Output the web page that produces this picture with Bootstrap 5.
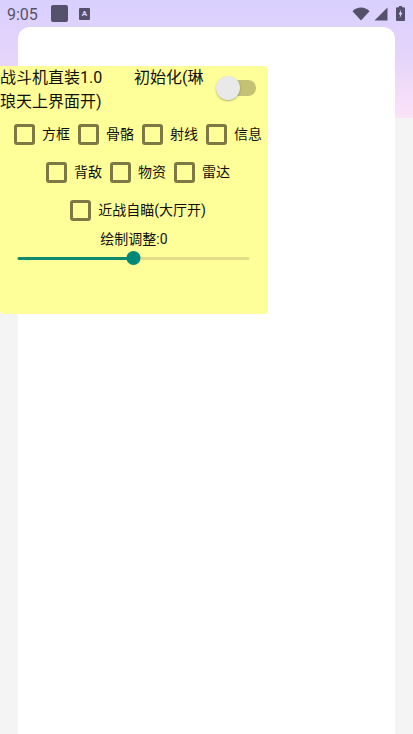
<!DOCTYPE html>
<html lang="zh">
<head>
<meta charset="utf-8">
<meta name="viewport" content="width=device-width, initial-scale=1">
<link href="https://cdn.jsdelivr.net/npm/bootstrap@5.3.0/dist/css/bootstrap.min.css" rel="stylesheet">
<style>
html,body{height:100%}
body{background:#f4f4f4;font-family:Roboto,"Noto Sans CJK SC",sans-serif;color:#111;overflow:hidden;position:relative}
.top-wash{height:118px;background:linear-gradient(180deg,#d9d0ff 0%,#e4d4fb 45%,#fbe2f7 100%)}
.status-row{height:27px;padding:0 8px 0 7px;color:#55516b;font-size:16px}
.status-time{width:44px;line-height:27px;margin-top:2px}
.status-square{width:17px;height:17px;border-radius:2px;background:#55516b}
.status-app{width:11px;height:12px;border-radius:1px;background:#55516b;color:#e0d6ff;font-size:8px;font-weight:700;line-height:12px;text-align:center;margin-left:11px}
.sheet{position:absolute;left:18px;right:18px;top:27px;bottom:0;background:#fff;border-radius:12px 12px 0 0}
.overlay-panel{position:absolute;left:0;top:66px;width:268px;height:248px;background:#ffff99;border-radius:0 4px 4px 4px}
.title-text{width:212px;font-size:16px;line-height:24px;white-space:pre-wrap}
.toggle-track{position:relative;display:block;width:32px;height:16px;border-radius:8px;background:#c4c074;margin:14px 0 0 12px}
.toggle-knob{position:absolute;left:-8px;top:-4px;width:24px;height:24px;border-radius:50%;background:#e9e9e9;box-shadow:0 1px 2px rgba(0,0,0,.3)}
.opt-row{height:38px;font-size:14px}
.opt-row-first{margin-top:1px}
.opt-item{padding-left:8px;gap:7px}
.form-check-input.opt-box{width:21px;height:21px;margin:0;background-color:transparent;border:3px solid #7d7945;border-radius:3px;flex:none}
.opt-label{white-space:nowrap;line-height:20px;width:28px}
.opt-item-wide .opt-label{width:auto}
.opt-item-plain{width:64px}
.adjust-label{font-size:14px;line-height:20px}
.form-range.adjust-range{display:block;width:232px;height:14px;margin:2px auto 0;padding:0;transform:translateX(-.5px)}
.adjust-range::-webkit-slider-runnable-track{height:3px;border-radius:2px;background:linear-gradient(90deg,#0f8a70 50%,#e1dd88 50%)}
.adjust-range::-webkit-slider-thumb{width:14px;height:14px;margin-top:-5.5px;border-radius:50%;background:#00897b;border:0;box-shadow:none;-webkit-appearance:none;appearance:none}
</style>
</head>
<body>
<div class="top-wash">
  <div class="status-row d-flex align-items-center">
    <span class="status-time">9:05</span>
    <span class="status-square"></span>
    <span class="status-app">A</span>
    <span class="d-flex align-items-center ms-auto">
      <svg width="18" height="14" viewBox="0 0 18 14" aria-hidden="true"><path d="M0.5 4.2 C5 -0.6 13 -0.6 17.5 4.2 L9 13.5 Z" fill="#55516b"/></svg>
      <svg class="ms-1" width="14" height="14" viewBox="0 0 14 14" aria-hidden="true"><path d="M13.5 0.5 V13.5 H0.5 Z" fill="#55516b"/></svg>
      <svg class="ms-2" width="9" height="15" viewBox="0 0 9 15" aria-hidden="true"><path d="M3 0 H6 V1.2 H8 A1 1 0 0 1 9 2.2 V14 A1 1 0 0 1 8 15 H1 A1 1 0 0 1 0 14 V2.2 A1 1 0 0 1 1 1.2 H3 Z" fill="#55516b"/><path d="M5.2 3.5 L2.6 8.6 H4.2 L3.7 12 L6.4 6.8 H4.8 Z" fill="#e0d6ff"/></svg>
    </span>
  </div>
</div>
<div class="sheet"></div>
<div class="overlay-panel">
  <div class="d-flex">
    <div class="title-text">战斗机直装1.0        初始化(琳琅天上界面开)</div>
    <span class="toggle-track"><span class="toggle-knob"></span></span>
  </div>
  <div class="opt-row opt-row-first d-flex justify-content-center align-items-center">
    <label class="opt-item opt-item-plain d-flex align-items-center"><input class="form-check-input opt-box" type="checkbox"><span class="opt-label">方框</span></label>
    <label class="opt-item opt-item-plain d-flex align-items-center"><input class="form-check-input opt-box" type="checkbox"><span class="opt-label">骨骼</span></label>
    <label class="opt-item opt-item-plain d-flex align-items-center"><input class="form-check-input opt-box" type="checkbox"><span class="opt-label">射线</span></label>
    <label class="opt-item opt-item-plain d-flex align-items-center"><input class="form-check-input opt-box" type="checkbox"><span class="opt-label">信息</span></label>
  </div>
  <div class="opt-row d-flex justify-content-center align-items-center">
    <label class="opt-item opt-item-plain d-flex align-items-center"><input class="form-check-input opt-box" type="checkbox"><span class="opt-label">背敌</span></label>
    <label class="opt-item opt-item-plain d-flex align-items-center"><input class="form-check-input opt-box" type="checkbox"><span class="opt-label">物资</span></label>
    <label class="opt-item opt-item-plain d-flex align-items-center"><input class="form-check-input opt-box" type="checkbox"><span class="opt-label">雷达</span></label>
  </div>
  <div class="opt-row d-flex justify-content-center align-items-center">
    <label class="opt-item opt-item-wide d-flex align-items-center"><input class="form-check-input opt-box" type="checkbox"><span class="opt-label">近战自瞄(大厅开)</span></label>
  </div>
  <div class="adjust-label text-center">绘制调整:0</div>
  <input class="form-range adjust-range" type="range" min="0" max="100" value="50" aria-label="绘制调整">
</div>
<script src="https://cdn.jsdelivr.net/npm/bootstrap@5.3.0/dist/js/bootstrap.bundle.min.js"></script>
</body>
</html>
